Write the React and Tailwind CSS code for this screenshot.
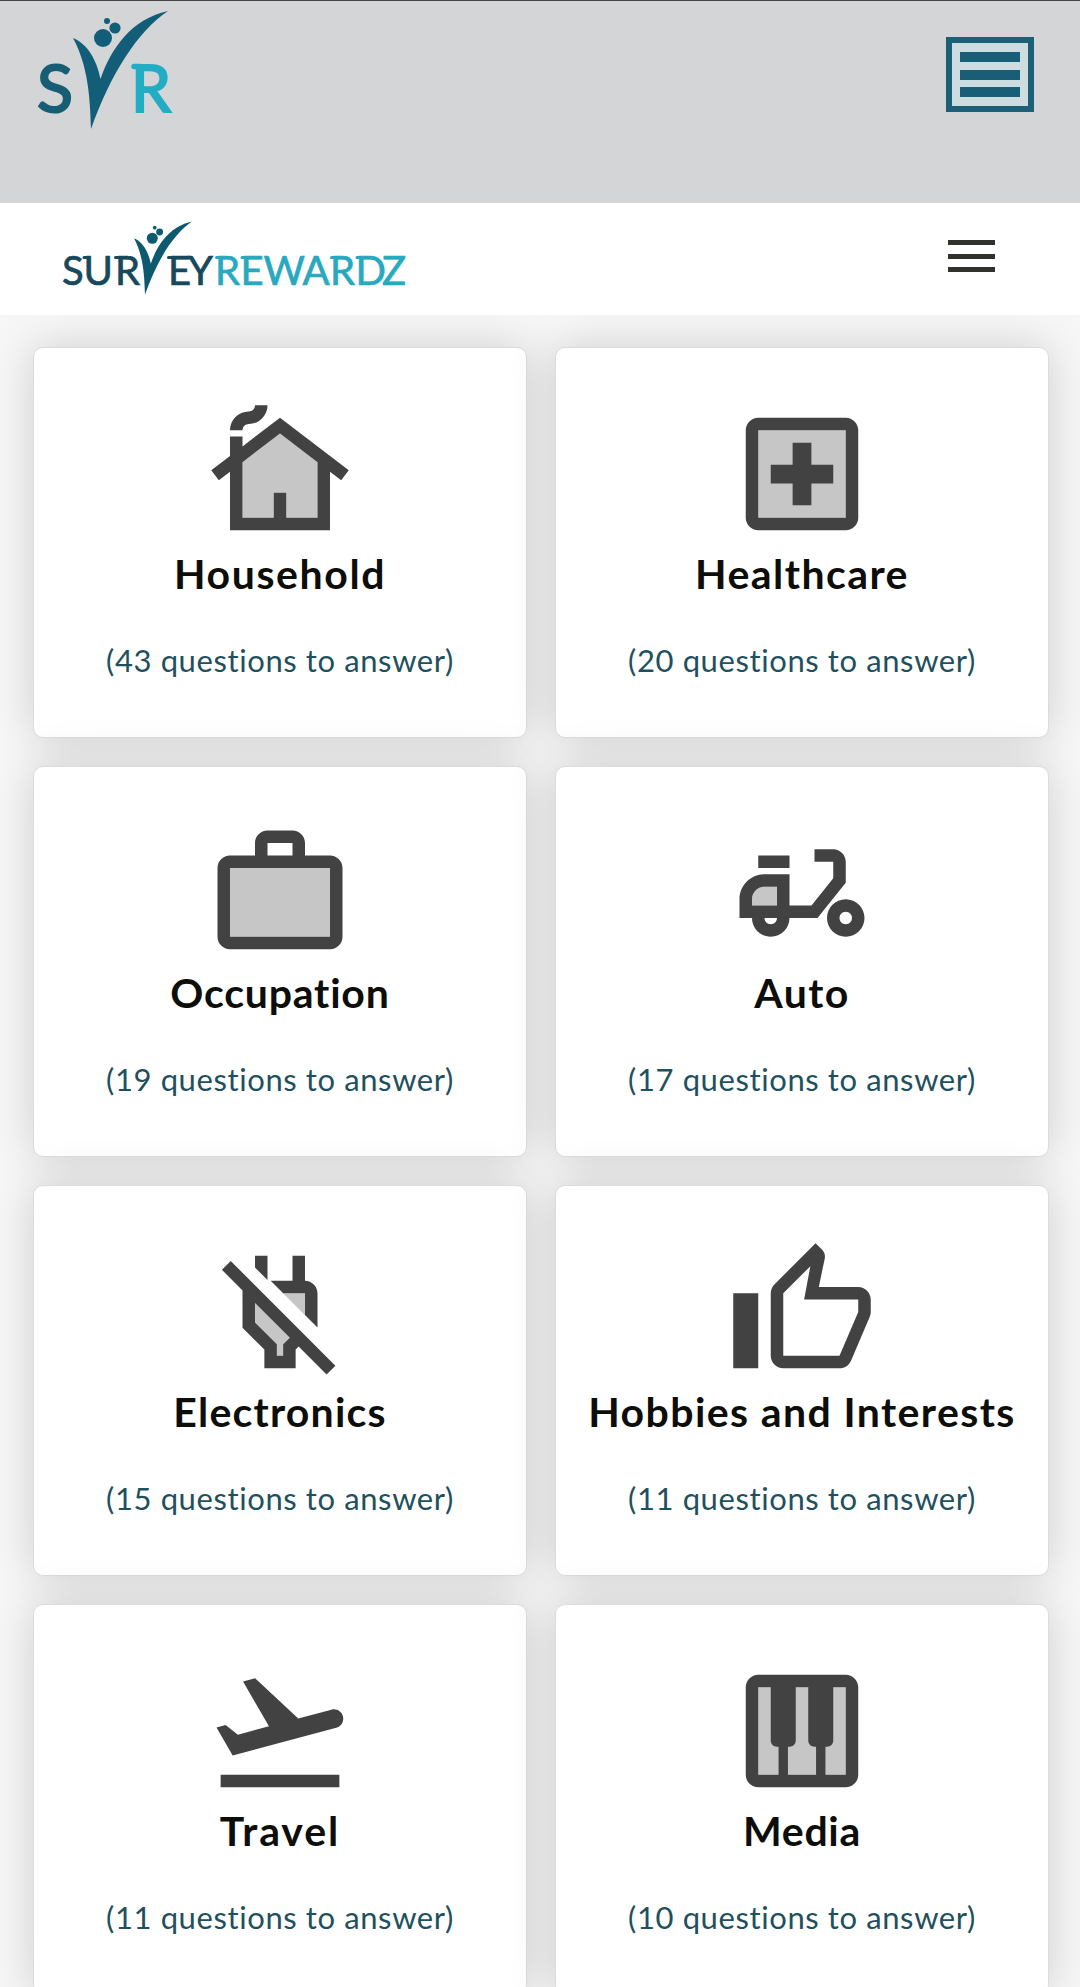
import React from "react";

const FONT = "font-[Lato,'Open_Sans',sans-serif]";

// Two-tone icons on a 24-unit grid: a pale fill under a solid outline.
const ICONS = {
  house: {
    pale: "M12 5.520 6 10.100V19h5v-4h2v4h5v-8.900z",
    solid:
      "M12 3 6 7.580V6H4v3.110L1 11.400l1.210 1.590L4 11.620V21h16v-9.380l1.790 1.360L23 11.400 12 3zm6 16h-5v-4h-2v4H6v-8.900l6-4.580 6 4.580V19zM10 1c0 1.660-1.340 3-3 3-.550 0-1 .450-1 1H4c0-1.660 1.340-3 3-3 .550 0 1-.450 1-1h2z",
  },
  hospital: {
    pale: "M5 5h14v14H5z",
    solid:
      "M19 3H5c-1.100 0-2 .900-2 2v14c0 1.100.900 2 2 2h14c1.100 0 2-.900 2-2V5c0-1.100-.900-2-2-2zm0 16H5V5h14v14zM10.500 17h3v-3.500H17v-3h-3.500V7h-3v3.500H7v3h3.500z",
  },
  work: {
    pale: "M4 8h16v11H4z",
    solid:
      "M20 6h-4V4c0-1.110-.890-2-2-2h-4c-1.110 0-2 .890-2 2v2H4c-1.110 0-2 .890-2 2v11c0 1.110.890 2 2 2h16c1.110 0 2-.890 2-2V8c0-1.110-.890-2-2-2zM10 4h4v2h-4V4zm10 15H4V8h16v11z",
  },
  moped: {
    pale: "M4 14v-1c0-1.100.900-2 2-2h2v3z",
    solid:
      "M19 7c0-1.100-.900-2-2-2h-3v2h3v2.650L13.520 14H10V9H6c-2.210 0-4 1.790-4 4v3h2c0 1.660 1.340 3 3 3s3-1.340 3-3h4.480L19 10.350V7zM4 14v-1c0-1.100.900-2 2-2h2v3H4zm3 3c-.550 0-1-.450-1-1h2c0 .550-.450 1-1 1zM5 6h5v2H5zM19 13c-1.660 0-3 1.340-3 3s1.340 3 3 3 3-1.340 3-3-1.340-3-3-3zm0 4c-.550 0-1-.450-1-1s.450-1 1-1 1 .450 1 1-.450 1-1 1z",
  },
  powerOff: {
    pale: "M12.480 9H16v3.500zM8 10.540v3.130l3.500 3.510V19h1v-1.830l1.070-1.070z",
    solid:
      "M16 9v3.490l2 2V9c0-1.100-.900-2-2-2V3h-2v4h-3.490l2 2H16zM10 6.480V3H8v1.880l2 2zM4.120 3.840 2.710 5.250 6 8.540v5.960l3.500 3.500v3h5v-3l.480-.480 4.470 4.470 1.410-1.410zM12.500 17.170V19h-1v-1.830L8 13.670v-3.130l5.570 5.570z",
  },
  thumb: {
    pale: "",
    solid:
      "M9 21h9c.830 0 1.540-.500 1.840-1.220l3.020-7.050c.090-.230.140-.470.140-.730v-2c0-1.100-.900-2-2-2h-6.310l.950-4.570.030-.320c0-.410-.170-.790-.440-1.060L14.170 1 7.580 7.590C7.220 7.950 7 8.450 7 9v10c0 1.100.900 2 2 2zM9 9l4.340-4.340L12.340 10H21v2l-3 7H9V9zM1 9h4v12H1z",
  },
  takeoff: {
    pale: "",
    solid:
      "M2.500 19h19v2h-19zM22.070 9.640c-.210-.800-1.040-1.280-1.840-1.060L14.920 10l-6.900-6.430-1.930.510 4.140 7.170-4.970 1.330-1.970-1.540-1.450.390 2.590 4.490L21 11.490c.810-.230 1.280-1.050 1.070-1.850z",
  },
  piano: {
    pale: "M5 5h14v14H5z",
    solid:
      "M19 3H5c-1.100 0-2 .900-2 2v14c0 1.100.900 2 2 2h14c1.100 0 2-.900 2-2V5c0-1.100-.900-2-2-2zm-5 11.500h.250V19h-4.500v-4.500H10c.550 0 1-.450 1-1V5h2v8.500c0 .550.450 1 1 1zM5 5h2v8.500c0 .550.450 1 1 1h.250V19H5V5zm14 14h-3.250v-4.500H16c.550 0 1-.450 1-1V5h2v14z",
  },
};

const CATEGORIES = [
  { name: "Household", count: 43, icon: "house", tracking: "tracking-[1.6px]" },
  { name: "Healthcare", count: 20, icon: "hospital", tracking: "tracking-[1.45px]" },
  { name: "Occupation", count: 19, icon: "work", tracking: "tracking-[0.8px]" },
  { name: "Auto", count: 17, icon: "moped", tracking: "tracking-[1.4px]" },
  { name: "Electronics", count: 15, icon: "powerOff", tracking: "tracking-[1.2px]" },
  { name: "Hobbies and Interests", count: 11, icon: "thumb", tracking: "tracking-[1.4px]" },
  { name: "Travel", count: 11, icon: "takeoff", tracking: "tracking-[1.9px]" },
  { name: "Media", count: 10, icon: "piano", tracking: "tracking-[0.7px]" },
];

// Leaping figure that stands in for the V; drawn in a 100 x 120 box.
function Figure() {
  return (
    <g>
      <path d="M0 27 C15 33 24 50 27.500 68 C38 38 58 8 95 0 C65 20 38 62 18 118 C17 85 15 55 0 27Z" />
      <circle cx="30" cy="27" r="9" />
      <circle cx="42" cy="17" r="5.6" />
      <circle cx="34" cy="10" r="3" />
    </g>
  );
}

function ShortLogo() {
  return (
    <svg width="180" height="140" viewBox="0 0 180 140" fontFamily="Lato, sans-serif" fontSize="66">
      <text x="37" y="111" fill="#175e75" stroke="#175e75" strokeWidth="2.2" textLength="36" lengthAdjust="spacingAndGlyphs">S</text>
      <g fill="#125e78" transform="translate(73 10)"><Figure /></g>
      <text x="131" y="111" fill="#22adc4" stroke="#22adc4" strokeWidth="2.2" textLength="40" lengthAdjust="spacingAndGlyphs">R</text>
      <path d="M134 65.500h6" stroke="#22adc4" strokeWidth="5.500" strokeLinecap="round" />
    </svg>
  );
}

function FullLogo() {
  return (
    <svg width="420" height="110" viewBox="0 203 420 110" fontFamily="Lato, sans-serif" fontSize="40" strokeLinecap="round">
      <g fill="#17495c" stroke="#17495c">
        <text x="62 83.500 115" y="285" strokeWidth="0.7">SUR</text>
        <text x="168 188" y="285" strokeWidth="0.7">EY</text>
        <path d="M84 257.500h3M115.500 257.500h3M168.500 257.500h3" strokeWidth="3" />
      </g>
      <g fill="#0d5a70" transform="translate(134 221.500) scale(0.61 0.62)"><Figure /></g>
      <g fill="#28a9c0" stroke="#28a9c0">
        <text x="215 240.500 263.500 302.500 330 355.500 382" y="285" strokeWidth="0.7">REWARDZ</text>
        <path d="M216.500 257.500h3M242 257.500h3M331.500 257.500h3M357 257.500h3" strokeWidth="3" />
      </g>
    </svg>
  );
}

function Card({ name, count, icon, tracking }) {
  return (
    <article className="flex h-[391px] flex-col items-center rounded-[10px] border border-[#dcdcdc] bg-white pt-[51px] shadow-[0_0_46px_rgba(0,0,0,0.17)]">
      <svg viewBox="0 0 24 24" className="size-[150px] shrink-0 fill-[#424242]">
        <path d={ICONS[icon].pale} opacity="0.3" />
        <path d={ICONS[icon].solid} fillRule="evenodd" />
      </svg>
      <h2 className={`-mt-px text-[41px] leading-[52px] font-bold whitespace-nowrap text-[#0d0d0a] ${tracking}`}>{name}</h2>
      <p className="mt-[38px] text-[31px] leading-[44px] tracking-[0.6px] whitespace-nowrap text-[#1f505e]">({count} questions to answer)</p>
    </article>
  );
}

export default function App() {
  return (
    <div className={`flex h-[1987px] w-[1080px] flex-col overflow-hidden bg-[#f7f7f7] ${FONT}`}>
      <header className="flex h-[203px] shrink-0 items-start justify-between border-t border-[#47474d] bg-[#d3d5d7] pr-[46px]">
        <ShortLogo />
        <div className="mt-[36px] flex h-[75px] w-[88px] flex-col justify-between border-[6px] border-[#1c6078] bg-[#cddce1] px-2 py-[9px]">
          <span className="h-[10px] bg-[#175e76]" />
          <span className="h-[10px] bg-[#175e76]" />
          <span className="h-[10px] bg-[#175e76]" />
        </div>
      </header>
      <nav className="flex h-[112px] shrink-0 items-start justify-between bg-white pr-[85px]">
        <FullLogo />
        <div className="mt-[37px] flex h-[32px] w-[47px] flex-col justify-between">
          <span className="h-[5px] bg-[#31312e]" />
          <span className="h-[5px] bg-[#31312e]" />
          <span className="h-[5px] bg-[#31312e]" />
        </div>
      </nav>
      <main className="grid flex-1 grid-cols-2 content-start gap-[28px] overflow-hidden pt-[32px] pr-[31px] pl-[33px]">
        {CATEGORIES.map((c) => (
          <Card key={c.name} {...c} />
        ))}
      </main>
    </div>
  );
}
